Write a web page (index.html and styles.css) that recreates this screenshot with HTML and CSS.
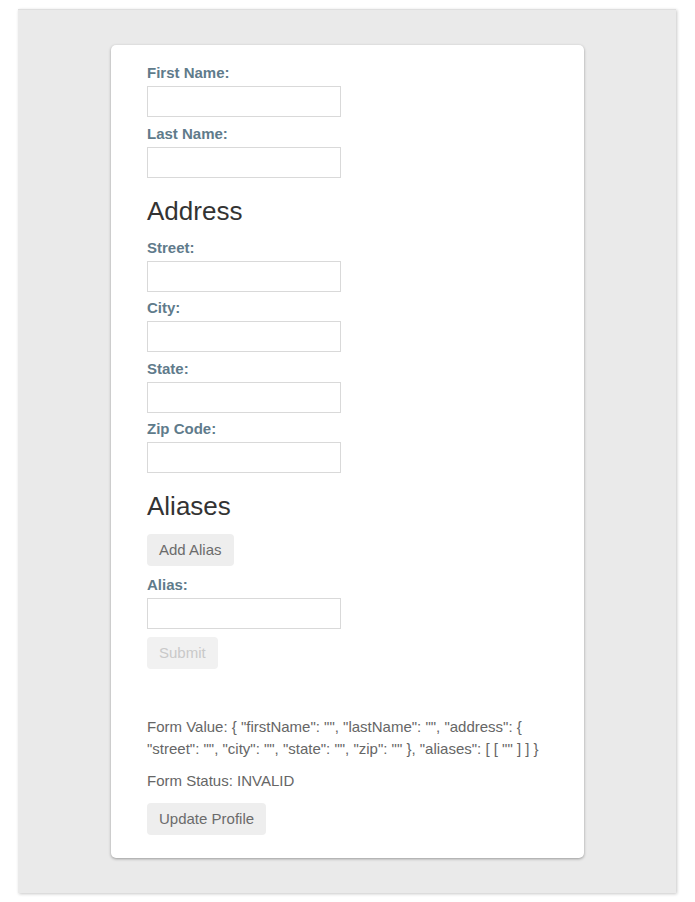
FILE: index.html
```html
<!DOCTYPE html>
<html lang="en">
<head>
<meta charset="utf-8">
<title>Profile Editor</title>
<link rel="stylesheet" href="styles.css">
</head>
<body>
<div class="panel">
  <div class="card">
    <form class="profile-form">
      <div class="field">
        <label class="field-label">First Name:</label>
        <input class="field-input" type="text">
      </div>
      <div class="field">
        <label class="field-label">Last Name:</label>
        <input class="field-input" type="text">
      </div>

      <h3 class="section-title">Address</h3>
      <div class="field">
        <label class="field-label">Street:</label>
        <input class="field-input" type="text">
      </div>
      <div class="field">
        <label class="field-label">City:</label>
        <input class="field-input" type="text">
      </div>
      <div class="field">
        <label class="field-label">State:</label>
        <input class="field-input" type="text">
      </div>
      <div class="field">
        <label class="field-label">Zip Code:</label>
        <input class="field-input" type="text">
      </div>

      <h3 class="section-title">Aliases</h3>
      <button class="btn btn-add" type="button">Add Alias</button>
      <div class="field">
        <label class="field-label">Alias:</label>
        <input class="field-input" type="text">
      </div>
      <button class="btn" type="submit" disabled>Submit</button>
    </form>

    <p class="form-value">Form Value: { "firstName": "", "lastName": "", "address": { "street": "", "city": "", "state": "", "zip": "" }, "aliases": [ [ "" ] ] }</p>
    <p class="form-status">Form Status: INVALID</p>
    <button class="btn btn-update" type="button">Update Profile</button>
  </div>
</div>
</body>
</html>
```
FILE: styles.css
```css
html, body {
  margin: 0;
  padding: 0;
  background: #ffffff;
}

body {
  padding: 9px 20px 10px 18px;
  font-family: "Liberation Sans", Arial, Helvetica, sans-serif;
}

.panel {
  width: 658px;
  box-sizing: border-box;
  background: #eaeaea;
  padding: 35px 92px 35px 93px;
  box-shadow: 1px 1px 3px rgba(0, 0, 0, 0.22);
  border-top: 1px solid #dedede;
}

.card {
  background: #ffffff;
  border-radius: 5px;
  box-shadow: 0 1px 3px rgba(0, 0, 0, 0.35);
  padding: 19px 36px 23px 36px;
}

.profile-form {
  margin: 0;
}

.field {
  margin-bottom: 7.5px;
}

.field-label {
  display: block;
  font-size: 15px;
  line-height: 18px;
  font-weight: bold;
  color: #5f7b8b;
  margin-bottom: 4px;
}

.field-input {
  display: block;
  box-sizing: border-box;
  width: 194px;
  height: 31px;
  margin: 0;
  border: 1px solid #d9d9d9;
  background: #ffffff;
  border-radius: 0;
  padding: 4px 6px;
  font-family: inherit;
  font-size: 14px;
}

.section-title {
  margin: 18px 0 13px;
  font-size: 26px;
  line-height: 30px;
  font-weight: normal;
  color: #333333;
}

.btn {
  display: block;
  height: 32px;
  padding: 0 12px;
  border: none;
  border-radius: 4px;
  background: #eeeeee;
  color: #6b6b6b;
  font-family: inherit;
  font-size: 15px;
  line-height: 32px;
}

.btn:disabled {
  background: #f1f1f1;
  color: #c9c9c9;
}

.btn-add {
  margin-bottom: 10px;
}

.form-value {
  margin: 47px 0 0;
  font-size: 15px;
  line-height: 22px;
  color: #666666;
}

.form-status {
  margin: 10px 0 0;
  font-size: 15px;
  line-height: 22px;
  color: #666666;
}

.btn-update {
  margin-top: 11px;
}
```
